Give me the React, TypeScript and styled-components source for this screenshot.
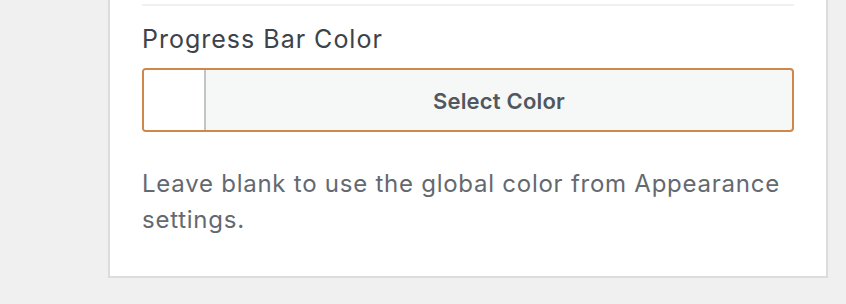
import React from "react";
import styled, { createGlobalStyle } from "styled-components";

const Global = createGlobalStyle`
  html, body { margin: 0; padding: 0; background: #f0f0f1; }
  body { font-family: Inter, "Noto Sans", sans-serif; }
  * { box-sizing: border-box; }
`;

const Page = styled.div`
  padding-left: 108px;
  height: 304px;
  overflow: hidden;
`;

const Panel = styled.div`
  width: 720px;
  background: #fff;
  border: 2px solid #dcdcde;
  border-top: none;
  padding: 4px 32px 38px;
`;

const Divider = styled.div`
  height: 2px;
  background: #f0f0f1;
`;

const Label = styled.div`
  margin-top: 18px;
  font-size: 25px;
  line-height: 30px;
  letter-spacing: 1px;
  color: #3c434a;
`;

const ColorButton = styled.button`
  margin-top: 14px;
  display: flex;
  width: 100%;
  height: 64px;
  padding: 0;
  border: 2px solid #d0874a;
  border-radius: 4px;
  background: #f6f7f7;
  overflow: hidden;
  cursor: pointer;
  font-family: inherit;
`;

const Swatch = styled.span<{ $color: string }>`
  width: 62px;
  flex: none;
  background: ${(p) => p.$color};
  border-right: 2px solid #c3c4c7;
`;

const ButtonText = styled.span`
  flex: 1;
  align-self: center;
  padding-top: 2px;
  text-align: center;
  font-size: 22px;
  font-weight: 600;
  letter-spacing: 0.2px;
  color: #50575e;
`;

const Help = styled.p`
  margin: 34px 0 0;
  font-size: 24px;
  line-height: 36px;
  letter-spacing: 0.75px;
  color: #646970;
`;

export default function App() {
  return (
    <>
      <Global />
      <Page>
        <Panel>
          <Divider />
          <Label>Progress Bar Color</Label>
          <ColorButton type="button">
            <Swatch $color="#ffffff" />
            <ButtonText>Select Color</ButtonText>
          </ColorButton>
          <Help>Leave blank to use the global color from Appearance settings.</Help>
        </Panel>
      </Page>
    </>
  );
}
